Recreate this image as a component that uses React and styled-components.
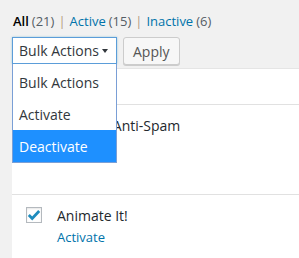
import React from "react";
import styled, { createGlobalStyle } from "styled-components";

const Global = createGlobalStyle`
  html, body { margin: 0; padding: 0; }
  body {
    background: #f1f1f1;
    font-family: "Open Sans", "Noto Sans", sans-serif;
    color: #23282d;
    overflow: hidden;
  }
`;

const Wrap = styled.div`
  padding: 12px 0 0 12px;
  display: flex;
  flex-direction: column;
`;

const Nav = styled.ul`
  list-style: none;
  margin: 0 0 0 1px;
  padding: 0;
  display: flex;
  font-size: 13px;
  line-height: 19px;
  color: #666;
`;

const NavItem = styled.li`
  display: flex;
  gap: 3px;
`;

const NavLink = styled.a`
  color: ${(p) => (p.$current ? "#000" : "#0073aa")};
  font-weight: ${(p) => (p.$current ? 600 : 400)};
  text-decoration: none;
`;

const Count = styled.span`
  color: #555d66;
`;

const Sep = styled.span`
  color: #b39a80;
  margin: 0 4px;
`;

const Controls = styled.div`
  display: flex;
  align-items: flex-start;
  gap: 6px;
  margin-top: 6px;
`;

const SelectWrap = styled.div`
  position: relative;
  width: 105px;
`;

const SelectBox = styled.div`
  box-sizing: border-box;
  height: 27px;
  border: 1px solid #5b9dd9;
  background: #fff;
  display: flex;
  align-items: center;
  justify-content: space-between;
  padding: 0 8px 0 6px;
  font-size: 14px;
  color: #32373c;
  box-shadow: 0 0 2px rgba(30, 140, 190, 0.4);
`;

const Menu = styled.ul`
  position: absolute;
  top: 27px;
  left: 0;
  width: 105px;
  box-sizing: border-box;
  margin: 0;
  padding: 2px 0 0;
  list-style: none;
  background: #fff;
  border: 1px solid #7a9fd6;
  border-top: none;
  z-index: 5;
`;

const MenuItem = styled.li`
  height: 32px;
  display: flex;
  align-items: center;
  padding-left: 6px;
  font-size: 14px;
  background: ${(p) => (p.$active ? "#1e90ff" : "#fff")};
  color: ${(p) => (p.$active ? "#fff" : "#32373c")};
`;

const Button = styled.button`
  box-sizing: border-box;
  height: 28px;
  padding: 0 9px;
  border: 1px solid #ccc;
  border-radius: 3px;
  background: #f7f7f7;
  box-shadow: 0 1px 0 #ccc;
  font-family: inherit;
  font-size: 14px;
  color: #555;
`;

const Table = styled.div`
  margin-top: 3px;
  background: #fff;
  border-top: 1px solid #e5e5e5;
  display: flex;
  flex-direction: column;
`;

const Head = styled.div`
  height: 35px;
  border-bottom: 1px solid #e1e1e1;
`;

const Row = styled.div`
  box-sizing: border-box;
  min-height: 90px;
  padding: 12px 0 0 14px;
  display: grid;
  grid-template-columns: 16px 1fr;
  column-gap: 15px;
  align-items: start;
  border-bottom: 1px solid #e1e1e1;
`;

const Check = styled.span`
  box-sizing: border-box;
  width: 16px;
  height: 16px;
  border: 1px solid #b4b9be;
  background: #fff;
  box-shadow: inset 0 1px 2px rgba(0, 0, 0, 0.1);
  display: flex;
  align-items: center;
  justify-content: center;
`;

const Info = styled.div`
  display: flex;
  flex-direction: column;
  margin-top: -2px;
`;

const Title = styled.div`
  font-size: 14px;
  line-height: 21px;
  color: #23282d;
`;

const ActionLink = styled.a`
  font-size: 13px;
  line-height: 22px;
  color: #0073aa;
  text-decoration: none;
`;

const Arrow = () => (
  <svg width="6" height="4" viewBox="0 0 6 4">
    <path d="M0 0h6L3 4z" fill="#32373c" />
  </svg>
);

const Tick = () => (
  <svg width="14" height="14" viewBox="0 0 14 14">
    <path d="M1.8 7l3.4 3.4L12.2 3" fill="none" stroke="#1e8cbe" strokeWidth="2.8" />
  </svg>
);

const plugins = [
  { name: "Akismet Anti-Spam", checked: false },
  { name: "Animate It!", checked: true },
];

export default function App() {
  return (
    <>
      <Global />
      <Wrap>
        <Nav>
          <NavItem>
            <NavLink $current>All</NavLink>
            <Count>(21)</Count>
          </NavItem>
          <Sep>|</Sep>
          <NavItem>
            <NavLink>Active</NavLink>
            <Count>(15)</Count>
          </NavItem>
          <Sep>|</Sep>
          <NavItem>
            <NavLink>Inactive</NavLink>
            <Count>(6)</Count>
          </NavItem>
        </Nav>
        <Controls>
          <SelectWrap>
            <SelectBox>
              <span>Bulk Actions</span>
              <Arrow />
            </SelectBox>
            <Menu>
              <MenuItem>Bulk Actions</MenuItem>
              <MenuItem>Activate</MenuItem>
              <MenuItem $active>Deactivate</MenuItem>
            </Menu>
          </SelectWrap>
          <Button>Apply</Button>
        </Controls>
        <Table>
          <Head />
          {plugins.map((p) => (
            <Row key={p.name}>
              <Check>{p.checked && <Tick />}</Check>
              <Info>
                <Title>{p.name}</Title>
                <ActionLink>Activate</ActionLink>
              </Info>
            </Row>
          ))}
        </Table>
      </Wrap>
    </>
  );
}
